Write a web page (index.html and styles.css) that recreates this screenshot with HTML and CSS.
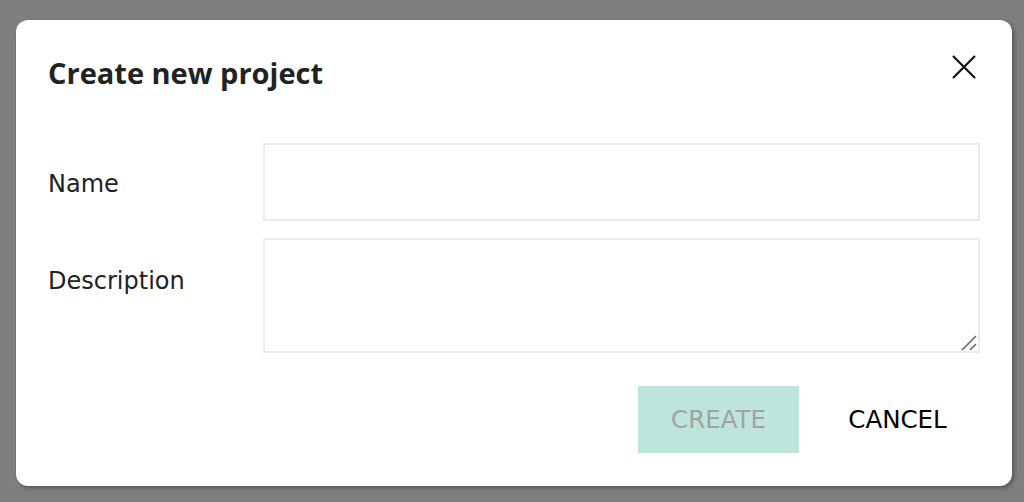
FILE: index.html
```html
<!DOCTYPE html>
<html>
<head>
<meta charset="utf-8">
<link rel="stylesheet" href="styles.css">
</head>
<body>
<div class="dialog">
  <div class="header">
    <h1 class="title">Create new project</h1>
    <button class="close" aria-label="Close">
      <svg width="24" height="24" viewBox="0 0 24 24"><path d="M1 1L23 23M23 1L1 23" stroke="#111" stroke-width="2.2" fill="none"/></svg>
    </button>
  </div>
  <div class="form">
    <label class="label label-name">Name</label>
    <input class="field name-field" type="text">
    <label class="label label-desc">Description</label>
    <div class="desc-wrap">
      <textarea class="field desc-field"></textarea>
      <svg class="grip" width="16" height="16" viewBox="0 0 16 16"><path d="M1 15L15 1M9 15L15 9" stroke="#6a6a6a" stroke-width="1.6" fill="none"/></svg>
    </div>
  </div>
  <div class="actions">
    <button class="btn btn-create">CREATE</button>
    <button class="btn btn-cancel">CANCEL</button>
  </div>
</div>
</body>
</html>
```
FILE: styles.css
```css
html, body {
  margin: 0;
  padding: 0;
  background: #7f7f7f;
  width: 1024px;
  height: 502px;
  overflow: hidden;
  font-family: "DejaVu Sans", sans-serif;
}
.dialog {
  box-sizing: border-box;
  margin: 20px 0 0 16px;
  width: 996px;
  height: 466px;
  background: #fff;
  border-radius: 12px;
  box-shadow: 2px 2px 4px rgba(0,0,0,0.35);
  padding: 0 32px 0 32px;
  display: flex;
  flex-direction: column;
}
.header {
  display: flex;
  justify-content: space-between;
  align-items: flex-start;
  height: 123px;
}
.title {
  margin: 35px 0 0 0;
  font-family: "Open Sans", sans-serif;
  font-size: 29px;
  font-weight: 700;
  color: #222;
  line-height: 36px;
}
.close {
  margin: 35px 4px 0 0;
  padding: 0;
  background: none;
  border: none;
  width: 24px;
  height: 24px;
}
.close svg { display: block; }
.form {
  display: grid;
  grid-template-columns: 215px 1fr;
  row-gap: 17px;
}
.label {
  font-size: 24px;
  color: #222;
  line-height: 30px;
}
.label-name { align-self: center; padding-top: 4px; }
.label-desc { padding-top: 28px; }
.field {
  box-sizing: border-box;
  border: 2px solid #ebebeb;
  margin: 0;
  font-family: inherit;
  font-size: 20px;
  outline: none;
  background: #fff;
}
.name-field { height: 78px; }
.desc-wrap {
  position: relative;
  height: 115px;
}
.desc-field {
  display: block;
  width: 100%;
  height: 115px;
  resize: none;
}
.grip {
  position: absolute;
  right: 3px;
  bottom: 2px;
  pointer-events: none;
}
.actions {
  display: flex;
  justify-content: flex-end;
  gap: 16px;
  margin-top: 33px;
}
.btn {
  height: 67px;
  border: none;
  font-family: inherit;
  font-size: 24.5px;
  padding: 0;
  background: transparent;
  color: #000;
}
.btn-create {
  width: 161px;
  background: #bde5db;
  color: #a2a2a2;
}
.btn-cancel {
  width: 165px;
}
```
